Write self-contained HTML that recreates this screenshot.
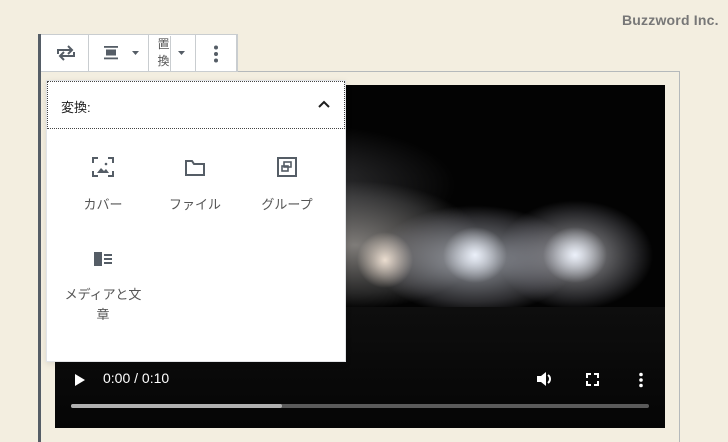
<!DOCTYPE html>
<html><head><meta charset="utf-8"><style>
*{margin:0;padding:0;box-sizing:border-box}
html,body{width:728px;height:442px;overflow:hidden}
body{background:#f3eee0;position:relative;font-family:"Liberation Sans","Noto Sans CJK JP",sans-serif}
.logo{position:absolute;left:622px;top:12px;font-size:14px;color:#777;letter-spacing:0.2px;font-weight:bold}
.lbar{position:absolute;left:38px;top:34px;width:3px;height:408px;background:#555d66}
.frame{position:absolute;left:41px;top:71px;width:639px;height:371px;border:1px solid #b5b9bb;border-left:none;border-bottom:none}
.tb{position:absolute;left:41px;top:34px;width:197px;height:38px;background:#fff;border:1px solid #c9cdd0;border-left:none;display:flex}
.tb div{border-right:1px solid #c9cdd0;height:100%;position:relative}
.video{position:absolute;left:55px;top:85px;width:610px;height:343px;background:#030303;overflow:hidden}
.fx{position:absolute;inset:0;background:
radial-gradient(ellipse 40px 35px at 420px 170px,rgba(240,245,255,.95),transparent 80%),
radial-gradient(ellipse 40px 35px at 520px 170px,rgba(240,245,255,.95),transparent 80%),
radial-gradient(ellipse 35px 35px at 330px 175px,rgba(250,235,220,.9),transparent 80%),
radial-gradient(ellipse 130px 70px at 420px 175px,rgba(200,205,215,.75),rgba(140,140,150,.3) 60%,transparent 78%),
radial-gradient(ellipse 100px 70px at 520px 170px,rgba(220,220,225,.7),rgba(150,150,160,.25) 60%,transparent 78%),
radial-gradient(ellipse 160px 80px at 300px 160px,rgba(210,205,200,.6),rgba(150,150,150,.25) 60%,transparent 80%),
radial-gradient(ellipse 200px 80px at 250px 100px,rgba(110,110,115,.45),transparent 75%);}
.crowd{position:absolute;left:0;right:0;top:222px;bottom:0;background:linear-gradient(#0e0e0e,#050505)}
.pop{position:absolute;left:46px;top:80px;width:300px;height:282px;background:#fff;border:1px solid #e2e4e7;box-shadow:0 2px 6px rgba(0,0,0,.1)}
.ph{position:absolute;left:0;top:0;width:298px;height:48px;border:1px dotted #444;font-size:13px;color:#1e1e1e}
.it{position:absolute;width:100px;text-align:center;font-size:13px;color:#555;line-height:20px}
.it svg{display:block;margin:0 auto 18px}
.ctl{position:absolute;color:#fff}
</style></head><body>
<div class="logo">Buzzword Inc.</div>
<div class="frame"></div>
<div class="video"><div class="fx"></div><div class="crowd"></div>
<svg class="ctl" style="left:19px;top:288px" width="12" height="14"><path d="M1 1L11 7L1 13Z" fill="#fff"/></svg>
<div class="ctl" style="left:48px;top:285px;font-size:14px">0:00 / 0:10</div>
<svg class="ctl" style="left:481px;top:286px" width="18" height="16"><path d="M1 5h4l5-4v14l-5-4H1z" fill="#fff"/><path d="M12 4a5 5 0 0 1 0 8" stroke="#fff" stroke-width="2" fill="none"/></svg>
<svg class="ctl" style="left:531px;top:288px" width="13" height="13" fill="none" stroke="#fff" stroke-width="2"><path d="M1 5V1h4M8 1h4v4M12 8v4H8M5 12H1V8"/></svg>
<svg class="ctl" style="left:583px;top:287px" width="6" height="16" fill="#fff"><circle cx="3" cy="2.5" r="1.8"/><circle cx="3" cy="8" r="1.8"/><circle cx="3" cy="13.5" r="1.8"/></svg>
<div style="position:absolute;left:16px;top:319px;width:578px;height:4px;background:#5a5a5a;border-radius:2px"><div style="width:211px;height:4px;background:#b0b0b0;border-radius:2px"></div></div>
</div>
<div class="lbar"></div>
<div class="tb">
 <div style="width:48px"><svg style="position:absolute;left:15px;top:10px" width="20" height="16" fill="none" stroke="#555d66" stroke-width="2"><path d="M2 9V5h14M12 1l4 4-4 4M18 7v4H4M8 15l-4-4 4-4"/></svg></div>
 <div style="width:61px"><svg style="position:absolute;left:15px;top:11px" width="16" height="14"><rect x="0" y="0" width="14" height="1.8" fill="#555d66"/><rect x="2" y="3.5" width="10" height="6" fill="#555d66"/><rect x="0" y="11.5" width="14" height="1.8" fill="#555d66"/></svg><svg style="position:absolute;left:43px;top:16px" width="7" height="5"><path d="M0 0h7L3.5 4z" fill="#555d66"/></svg></div>
 <div style="width:47px"><div style="position:absolute;left:8px;top:1px;font-size:12px;color:#555;line-height:17px;width:14px">置<br>換</div><svg style="position:absolute;left:29px;top:16px" width="7" height="5"><path d="M0 0h7L3.5 4z" fill="#555d66"/></svg></div>
 <div style="width:41px"><svg style="position:absolute;left:17px;top:10px" width="6" height="18" fill="#555d66"><circle cx="3" cy="2.5" r="2"/><circle cx="3" cy="9" r="2"/><circle cx="3" cy="15.5" r="2"/></svg></div>
</div>
<div class="pop">
 <div class="ph"><span style="position:absolute;left:13px;top:15px">変換:</span><svg style="position:absolute;left:270px;top:18px" width="12" height="8" fill="none" stroke="#1e1e1e" stroke-width="2"><path d="M1 7l5-5 5 5"/></svg></div>
 <div class="it" style="left:6px;top:76px"><svg width="22" height="20" fill="none" stroke="#555d66" stroke-width="2"><path d="M1 6V1h5M16 1h5v5M21 14v5h-5M6 19H1v-5"/><path d="M5 16l4-5 3 3 2-2 3 4z" fill="#555d66" stroke="none"/><circle cx="14" cy="7" r="1.3" fill="#555d66" stroke="none"/></svg>カバー</div>
 <div class="it" style="left:98px;top:76px"><svg width="22" height="20" fill="none" stroke="#555d66" stroke-width="2"><path d="M2 4h6l2 3h10v11H2z"/></svg>ファイル</div>
 <div class="it" style="left:190px;top:76px"><svg width="22" height="20" fill="none" stroke="#555d66" stroke-width="2"><rect x="2" y="1" width="18" height="18"/><rect x="8" y="5" width="7" height="5" stroke-width="1.6"/><rect x="6" y="9" width="6" height="5" stroke-width="1.6"/></svg>グループ</div>
 <div class="it" style="left:6px;top:170px"><svg width="22" height="16"><rect x="2" y="1" width="8" height="14" fill="#555d66"/><rect x="12" y="3" width="8" height="2" fill="#555d66"/><rect x="12" y="7" width="8" height="2" fill="#555d66"/><rect x="12" y="11" width="8" height="2" fill="#555d66"/></svg><div style="margin-top:4px">メディアと文<br>章</div></div>
</div>
</body></html>
